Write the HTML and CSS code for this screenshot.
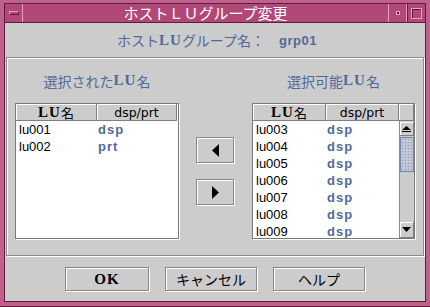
FILE: index.html
```html
<!DOCTYPE html>
<html lang="ja">
<head>
    <meta charset="utf-8">
    <title>ホストＬＵグループ変更</title>
    <link rel="stylesheet" href="styles.css">
</head>
<body>
<div class="window">
  <div class="frame">
    <div class="titlebar">
      <div class="tbtn menu"><span class="bar"></span></div>
      <div class="title">ホストＬＵグループ変更</div>
      <div class="tbtn min"><span class="dot"></span></div>
      <div class="tbtn max"><span class="box"></span></div>
    </div>

    <div class="content">
      <div class="heading">ホスト<span class="lu">LU</span>グループ名<span class="colon">：</span><b class="group">grp01</b></div>

      <div class="panel">
        <div class="column">
          <div class="label">選択された<span class="lu">LU</span>名</div>
          <div class="list left">
            <div class="listHead">
              <div class="hcell name"><span class="lu">LU</span>名</div>
              <div class="hcell type">dsp/prt</div>
            </div>
            <div class="rows">
              <div class="row"><span class="name">lu001</span><span class="type">dsp</span></div>
              <div class="row"><span class="name">lu002</span><span class="type">prt</span></div>
            </div>
          </div>
        </div>

        <div class="arrows">
          <button class="btn arrow">
            <svg width="7" height="13" viewBox="0 0 7 13"><polygon points="7,0 7,13 0,6.5" fill="#000"/></svg>
          </button>
          <button class="btn arrow">
            <svg width="7" height="13" viewBox="0 0 7 13"><polygon points="0,0 0,13 7,6.5" fill="#000"/></svg>
          </button>
        </div>

        <div class="column">
          <div class="label">選択可能<span class="lu">LU</span>名</div>
          <div class="list right">
            <div class="listHead">
              <div class="hcell name"><span class="lu">LU</span>名</div>
              <div class="hcell type">dsp/prt</div>
              <div class="hcell corner"></div>
            </div>
            <div class="listBody">
              <div class="rows">
                <div class="row"><span class="name">lu003</span><span class="type">dsp</span></div>
                <div class="row"><span class="name">lu004</span><span class="type">dsp</span></div>
                <div class="row"><span class="name">lu005</span><span class="type">dsp</span></div>
                <div class="row"><span class="name">lu006</span><span class="type">dsp</span></div>
                <div class="row"><span class="name">lu007</span><span class="type">dsp</span></div>
                <div class="row"><span class="name">lu008</span><span class="type">dsp</span></div>
                <div class="row"><span class="name">lu009</span><span class="type">dsp</span></div>
              </div>
              <div class="scrollbar">
                <div class="sbtn up">
                  <svg width="9" height="6" viewBox="0 0 9 6"><polygon points="4.5,0 9,4 0,4" fill="#000"/><rect x="0" y="5" width="9" height="1" fill="#000"/></svg>
                </div>
                <div class="thumb"></div>
                <div class="track"></div>
                <div class="sbtn down">
                  <svg width="9" height="5" viewBox="0 0 9 5"><polygon points="0,0 9,0 4.5,5" fill="#000"/></svg>
                </div>
              </div>
            </div>
          </div>
        </div>
      </div>

      <div class="actions">
        <button class="btn ok">OK</button>
        <button class="btn wide">キャンセル</button>
        <button class="btn wide">ヘルプ</button>
      </div>
    </div>
  </div>
</div>
</body>
</html>
```

FILE: styles.css
```css
* { box-sizing: border-box }

body {
    margin: 0;
    width: 430px;
    height: 307px;
    overflow: hidden;
    font-family: "Noto Sans CJK JP", sans-serif;
}

.window {
    width: 430px;
    height: 307px;
    padding: 3px 4px 4px 4px;
    background-color: #c2608d;
    border-bottom: 1px solid #5e1f3f;
}

.frame {
    height: 100%;
    border: 1px solid #5e1f3f;
    display: flex;
    flex-direction: column;
}

.titlebar {
    height: 19px;
    display: flex;
    background-color: #b24877;
    border-bottom: 1px solid #5e1f3f;
    color: white;
}

.tbtn {
    display: flex;
    align-items: center;
    justify-content: center;
}

.menu { width: 18px; border-right: 1px solid #e6a0c0 }
.min { width: 18px; border-left: 1px solid #e6a0c0 }
.max { width: 19px; border-left: 1px solid #e6a0c0; box-shadow: inset 1px 0 #5e1f3f }

.bar {
    width: 10px;
    height: 4px;
    border: 1px solid #e6a0c0;
    border-right-color: #5e1f3f;
    border-bottom-color: #5e1f3f;
}

.dot {
    width: 4px;
    height: 4px;
    border: 1px solid #e6a0c0;
    background-color: #5e1f3f;
}

.box {
    width: 11px;
    height: 11px;
    border: 1px solid #e6a0c0;
    box-shadow: inset 1px 1px #5e1f3f;
}

.title {
    flex: 1;
    text-align: center;
    font-size: 15px;
    line-height: 18px;
}

.content {
    flex: 1;
    background-color: #cccccc;
    display: flex;
    flex-direction: column;
}

.heading {
    height: 34px;
    display: flex;
    align-items: center;
    justify-content: center;
    color: #52699a;
    font-size: 14px;
    padding-left: 4px;
}

.lu {
    font-family: "Liberation Serif", serif;
    font-weight: bold;
    font-size: 15px;
    letter-spacing: 1px;
}

.colon { margin-right: 14px }

.group {
    font-family: "Liberation Sans", sans-serif;
    font-size: 13px;
    letter-spacing: 0.5px;
}

.panel {
    height: 199px;
    margin: 0 1px;
    padding-left: 8px;
    display: flex;
    border: 1px solid #8c8c8c;
    box-shadow: inset 1px 1px #fff, 1px 1px #fff;
}

.column {
    display: flex;
    flex-direction: column;
}

.label {
    height: 45px;
    display: flex;
    align-items: center;
    justify-content: center;
    color: #52699a;
    font-size: 14px;
}

.list {
    height: 136px;
    background-color: white;
    border: 1px solid #7a7a7a;
    box-shadow: 1px 1px #fff;
    overflow: hidden;
    display: flex;
    flex-direction: column;
}

.list.left { width: 164px }
.list.right { width: 163px }

.listHead {
    height: 17px;
    display: flex;
}

.hcell {
    height: 17px;
    background-color: #cccccc;
    border-right: 1px solid #808080;
    border-bottom: 1px solid #808080;
    box-shadow: inset 1px 1px #fff;
    display: flex;
    align-items: center;
    justify-content: center;
    font-size: 13px;
}

.hcell.type {
    font-family: "DejaVu Sans", sans-serif;
    font-size: 12.5px;
}

.left .hcell.name { width: 81px }
.left .hcell.type { width: 80px }
.right .hcell.name { width: 73px }
.right .hcell.type { width: 73px }
.hcell.corner { width: 15px }

.listBody {
    flex: 1;
    display: flex;
    min-height: 0;
}

.rows { flex: 1 }

.row {
    height: 17px;
    display: flex;
    align-items: center;
    font-family: "Liberation Sans", sans-serif;
    font-size: 13px;
}

.row .name { padding-left: 3px }
.left .row .name { width: 81px }
.right .row .name { width: 73px }

.row .type {
    color: #52699a;
    font-weight: bold;
    letter-spacing: 1px;
    padding-left: 1px;
}

.scrollbar {
    width: 15px;
    background-color: #cccccc;
    border-left: 1px solid #8c8c8c;
    display: flex;
    flex-direction: column;
    padding-top: 1px;
}

.sbtn {
    display: flex;
    align-items: center;
    justify-content: center;
    background-color: #cccccc;
    border-right: 1px solid #808080;
    border-bottom: 1px solid #808080;
    box-shadow: inset 1px 1px #fff;
}

.sbtn.up { height: 14px }
.sbtn.down { height: 16px }

.thumb {
    height: 35px;
    margin-top: 1px;
    border: 1px solid #6f87b3;
    background-color: #c1c7d6;
    background-image: radial-gradient(circle, #8e9ab5 0.8px, transparent 1px);
    background-size: 3px 3px;
}

.track { flex: 1 }

.arrows {
    width: 38px;
    margin: 45px 18px 0 17px;
    height: 136px;
    display: flex;
    flex-direction: column;
    justify-content: center;
    gap: 16px;
}

.btn {
    background-color: #cccccc;
    border: 1px solid #888888;
    box-shadow: 1px 1px #fff, inset 1px 1px #fff;
    padding: 0;
    margin: 0;
    color: black;
    display: flex;
    align-items: center;
    justify-content: center;
    font-family: "Noto Sans CJK JP", sans-serif;
    font-size: 14px;
}

.btn.arrow { width: 38px; height: 26px }

.actions {
    margin-top: 11px;
    display: flex;
    justify-content: center;
    gap: 16px;
}

.actions .btn { height: 24px }
.btn.ok {
    width: 84px;
    font-family: "Liberation Serif", serif;
    font-weight: bold;
    font-size: 15px;
    letter-spacing: 1px;
}
.btn.wide { width: 92px }
```
